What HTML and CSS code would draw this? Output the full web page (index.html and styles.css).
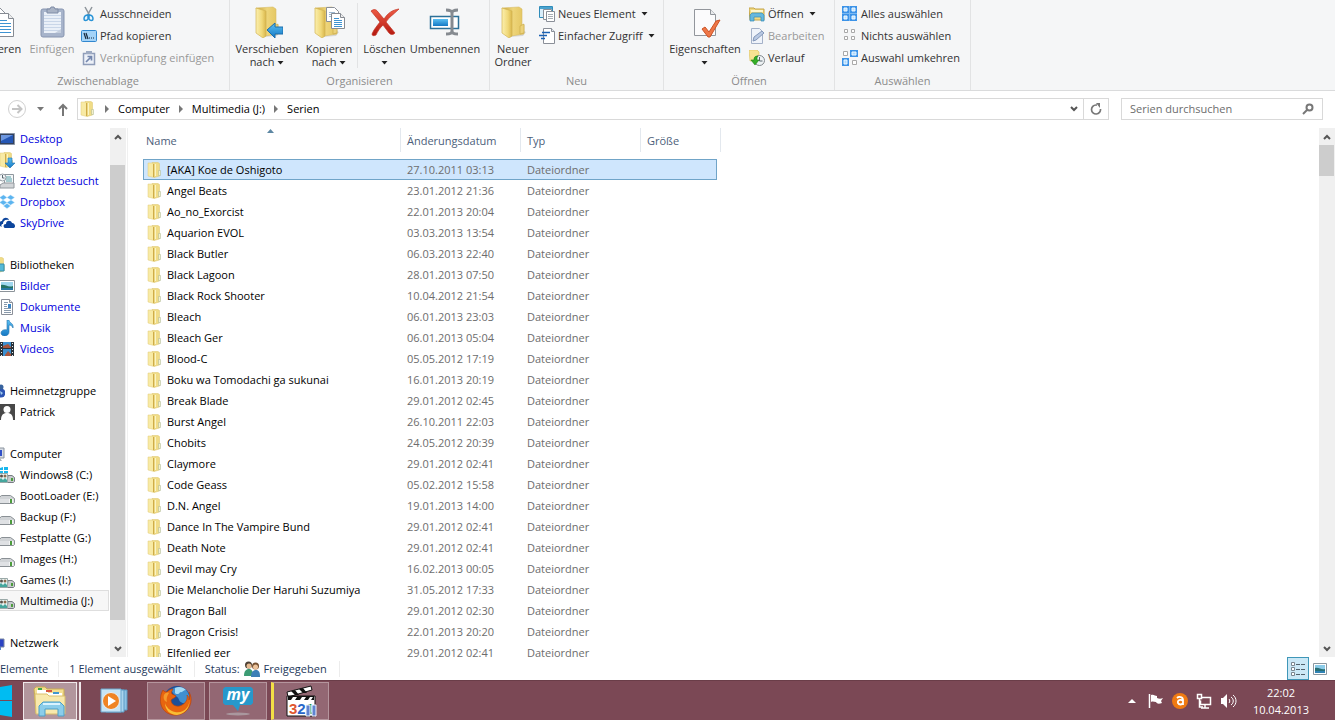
FILE: index.html
```html
<!DOCTYPE html>
<html lang="de">
<head>
  <meta charset="UTF-8">
  <title>Serien</title>
  <link rel="stylesheet" href="styles.css">
</head>
<body>

  <!-- Shared icons -->
  <svg class="sprite" width="0" height="0" aria-hidden="true">
    <defs>
      <linearGradient id="gold" x1="0" y1="0" x2="1" y2="0">
        <stop offset="0" stop-color="#fbefae"/><stop offset=".6" stop-color="#f0d878"/><stop offset="1" stop-color="#d9b64c"/>
      </linearGradient>
      <linearGradient id="goldDark" x1="0" y1="0" x2="1" y2="0">
        <stop offset="0" stop-color="#c9a43c"/><stop offset=".5" stop-color="#eed57a"/><stop offset="1" stop-color="#e3c560"/>
      </linearGradient>
      <linearGradient id="blue" x1="0" y1="0" x2="0" y2="1">
        <stop offset="0" stop-color="#5cc0f3"/><stop offset="1" stop-color="#1478c4"/>
      </linearGradient>
      <linearGradient id="red" x1="0" y1="0" x2="0" y2="1">
        <stop offset="0" stop-color="#ee5b45"/><stop offset="1" stop-color="#b3180f"/>
      </linearGradient>
      <radialGradient id="orange"><stop offset="0" stop-color="#ffc04a"/><stop offset="1" stop-color="#e36a0c"/></radialGradient>
    </defs>
    <symbol id="folder" viewBox="0 0 16 16">
      <path d="M5 .5h6l1.500 1V14L7 15.500z" fill="#f0dc86" stroke="#dcc46a" stroke-width=".5"/>
      <path d="M11.500 8.500h2v5h-2z" fill="#f4f0cc" stroke="#a9b58c" stroke-width=".5"/>
      <path d="M1 1h4l2 1v13.500L5 15l-4-1z" fill="#f8eaa4" stroke="#e0ca78" stroke-width=".5"/>
      <path d="M6.500 2v13" stroke="#cfac48"/>
      <path d="M8.500 2v12" stroke="#fbf4c4"/>
    </symbol>
    <symbol id="bigfolder" viewBox="0 0 32 32">
      <path d="M25 24l4 2-3 4-14 1z" fill="#000" opacity=".12"/>
      <path d="M5 2l17-1 3 2v16h2v9l-13 2z" fill="url(#goldDark)" stroke="#d9be66" stroke-width=".6"/>
      <path d="M23 20l4-2v9l-4 1z" fill="#ecd27b" stroke="#c8a845" stroke-width=".6"/>
      <path d="M5 2l10 3v25l-3 2-7-5z" fill="url(#gold)" stroke="#d3b654" stroke-width=".7"/>
    </symbol>
    <symbol id="page" viewBox="0 0 16 16">
      <path d="M2.500 .5h8l3 3v12h-11z" fill="#fff" stroke="#8a8f98"/>
      <path d="M10.500 .5v3h3" fill="#e4e8ee" stroke="#8a8f98"/>
    </symbol>
    <symbol id="drive" viewBox="0 0 16 16">
      <path d="M2.500 7.500h9l4 3v4l-1 1H-1v-5z" fill="#d0d3d6" stroke="#8a9095"/>
      <path d="M0 11h15v4H0z" fill="#dfe1e4"/>
      <path d="M10 11h4v4h-4z" fill="#f3f4f4"/>
      <path d="M11 11h2v4h-2z" fill="#4c9c3d"/>
    </symbol>
    <symbol id="drivepeople" viewBox="0 0 16 16">
      <path d="M9 8.500h4l2.500 2v4l-1 1H8z" fill="#c6cacd" stroke="#777d83"/>
      <path d="M12 11h2v3h-2z" fill="#4c9c3d"/>
      <path d="M-.5 6.500h9v9h-9z" fill="#e9f4f2" stroke="#9aa9a8"/>
      <circle cx="2.500" cy="9" r="1.500" fill="#59504a"/><circle cx="6" cy="9" r="1.500" fill="#8d6b4e"/>
      <path d="M0 15v-2l2-2 2 2 2-2 2 2v2z" fill="#45a69d"/>
    </symbol>
    <symbol id="caret" viewBox="0 0 7 4"><path d="M.5 0h6l-3 3.500z" fill="#222"/></symbol>
    <symbol id="tri" viewBox="0 0 4 8"><path d="M0 0l4 4-4 4z" fill="#777"/></symbol>
    <symbol id="down" viewBox="0 0 8 8"><path d="M1 2l3 3 3-3" fill="none" stroke="#555" stroke-width="2"/></symbol>
    <symbol id="up" viewBox="0 0 8 8"><path d="M1 6l3-3 3 3" fill="none" stroke="#555" stroke-width="2"/></symbol>
  </svg>

  <!-- Ribbon -->
  <div class="ribbon">
    <section class="group clipboard">
      <div class="tools">
        <button class="big">
          <svg viewBox="0 0 32 32"><path d="M5 2h13l5 5v19H5z" fill="#fff" stroke="#8a8f98"/><path d="M14.500 7.500h12l5 5v18h-17z" fill="#fff" stroke="#858a92"/><path d="M26.500 7.500v5h5" fill="#eee" stroke="#858a92"/><path d="M17 14.500h8m-8 3h12m-12 3h12m-12 3h12m-12 3h12" stroke="#3d93d2"/></svg>
          <span>Kopieren</span>
        </button>
        <button class="big" disabled>
          <svg viewBox="0 0 32 32"><rect x="5" y="3" width="23" height="28" rx="2" fill="#a7b4cb" stroke="#8795b0"/><path d="M8 6h17v21H8z" fill="#eaf0f8"/><path d="M8 9.500h17m-17 3h17m-17 3h17m-17 3h17m-17 3h17m-17 3h17" stroke="#c9d6e8"/><path d="M19 27h6v-4z" fill="#c5cfdf"/><path d="M11 3h3l1-2h3l1 2h3v4H11z" fill="#a9b3c5" stroke="#7f8ca6"/></svg>
          <span>Einfügen</span>
        </button>
        <div class="smalls">
          <button class="small"><svg viewBox="0 0 16 16"><path d="M4 1l5 9M11 1 6 10" stroke="#8d949b" stroke-width="1.500"/><path d="M7 9c-3 0-4 2-4 4s3 2 4 0zM8 9c3 0 4 2 4 4s-3 2-4 0z" fill="#e8f5fd" stroke="#2993d6" stroke-width="1.500"/></svg>Ausschneiden</button>
          <button class="small"><svg viewBox="0 0 16 16"><rect x=".5" y="2.500" width="15" height="11" rx="1" fill="#a4d3f8" stroke="#3187cf"/><path d="M3 5l2 6m0-6 2 6m1-1h1m1 0h1m1 0h1" stroke="#16283c" stroke-width="1.200" fill="none"/></svg>Pfad kopieren</button>
          <button class="small" disabled><svg viewBox="0 0 16 16"><path d="M2.500 3.500h11v11h-11z" fill="#edf1f8" stroke="#8f9db9" stroke-width="1.500"/><path d="M5 1h6v3H5z" fill="#9daac2"/><path d="M5 12l5-5M6.500 6.500H10.500V10.500" fill="none" stroke="#7386ad" stroke-width="1.700"/></svg>Verknüpfung einfügen</button>
        </div>
      </div>
      <h2>Zwischenablage</h2>
    </section>

    <section class="group organize">
      <div class="tools">
        <button class="big">
          <svg viewBox="0 0 32 32"><use href="#bigfolder"/><path d="M16 24l8-7v4h8v7h-8v4z" fill="url(#blue)" stroke="#1a6dac"/></svg>
          <span>Verschieben<br>nach <svg class="caret"><use href="#caret"/></svg></span>
        </button>
        <button class="big">
          <svg viewBox="0 0 32 32"><use href="#bigfolder" x="-3"/><path d="M13.500 1.500h8l4 4v10h-12z" fill="#fff" stroke="#8a8f98"/><path d="M16 6.500h6m-6 2h6m-6 2h6" stroke="#9db9d2"/><path d="M18.500 7.500h9l4 4v11h-13z" fill="#fff" stroke="#858a92"/><path d="M27.500 7.500v4h4" fill="#eee" stroke="#858a92"/><path d="M21 12.500h5m-5 2h8m-8 2h8m-8 2h8m-8 2h8" stroke="#3d93d2"/></svg>
          <span>Kopieren<br>nach <svg class="caret"><use href="#caret"/></svg></span>
        </button>
        <button class="big delete">
          <svg viewBox="0 0 32 32"><path d="M2 5c3-2 5-2 7 1l6 7c4-6 8-9 15-10-6 6-10 8-13 13l9 11c-2 2-4 2-6 0l-6-8c-4 4-5 6-7 10-2 1-4 1-4-1 2-5 5-8 8-12z" fill="url(#red)" stroke="#c13324" stroke-width=".7"/></svg>
          <span>Löschen<br><svg class="caret"><use href="#caret"/></svg></span>
        </button>
        <button class="big">
          <svg viewBox="0 0 32 32"><path d="M1.500 10.500h28v12h-28z" fill="#fff" stroke="#2c7098" stroke-width="1.500"/><path d="M4 13h15v7H4z" fill="url(#blue)"/><path d="M17 4c4 0 6 1 6 3 0-2 2-3 6-3M17 28c4 0 6-1 6-3 0 2 2 3 6 3M23 7v18" fill="none" stroke="#858a90" stroke-width="3"/></svg>
          <span>Umbenennen</span>
        </button>
      </div>
      <h2>Organisieren</h2>
    </section>

    <section class="group new">
      <div class="tools">
        <button class="big">
          <svg viewBox="0 0 32 32"><use href="#bigfolder"/></svg>
          <span>Neuer<br>Ordner</span>
        </button>
        <div class="smalls">
          <button class="small"><svg viewBox="0 0 16 16"><path d="M.5 .5h13v11H.5z" fill="#d8eefb" stroke="#2f8cba"/><path d="M1 1h12v2H1z" fill="#4aa3cf"/><path d="M4.500 3.500h8v10h-8z" fill="#fff" stroke="#8a8f98"/><path d="M7.500 5.500h8v10h-8z" fill="#fff" stroke="#8a8f98"/><path d="M9 8.500h5m-5 2h5m-5 2h5" stroke="#a7adb4"/></svg>Neues Element <svg class="caret"><use href="#caret"/></svg></button>
          <button class="small"><svg viewBox="0 0 16 16"><use href="#page" x="2"/><path d="M3 4.500h8M0 7.500h8M2 10.500h4" stroke="#1b62b4" stroke-width="1.500"/></svg>Einfacher Zugriff <svg class="caret"><use href="#caret"/></svg></button>
        </div>
      </div>
      <h2>Neu</h2>
    </section>

    <section class="group open">
      <div class="tools">
        <button class="big">
          <svg viewBox="0 0 32 32"><path d="M5.500 3.500h16l5 5v21h-21z" fill="#fbfbfc" stroke="#92969c"/><path d="M21.500 3.500v5h5" fill="#e8eaec" stroke="#92969c"/><path d="M13 23l3-2 4 5 7-11 4-1-10 17h-2z" fill="#ee7647" stroke="#cc5426"/></svg>
          <span>Eigenschaften<br><svg class="caret"><use href="#caret"/></svg></span>
        </button>
        <div class="smalls">
          <button class="small"><svg viewBox="0 0 16 16"><path d="M0 2h5l1 1h9v11H1z" fill="#f2da83" stroke="#c4a548"/><path d="M2 4h12v2H2z" fill="#fdf6cf"/><path d="M1 9l2-2h10l2 2v6h-3v-4H5v4H1z" fill="#66b8de" stroke="#348bb5" stroke-width=".7"/></svg>Öffnen <svg class="caret"><use href="#caret"/></svg></button>
          <button class="small" disabled><svg viewBox="0 0 16 16"><path d="M2.500 .5h8l3 3v12h-11z" fill="#eff3fa" stroke="#a4b1c8"/><path d="M4 13l1-4 8-6 2 2-8 7z" fill="#b8c8e2" stroke="#8397b9"/></svg>Bearbeiten</button>
          <button class="small"><svg viewBox="0 0 16 16"><path d="M0 0h8l2 2v9H1z" fill="#f8e392" stroke="#dcbf58" stroke-width=".6"/><circle cx="10.500" cy="10.500" r="5" fill="#eef2f4" stroke="#82898d"/><path d="M10.500 7v4h3" fill="none" stroke="#59666e"/><path d="M9 6c-3 0-4 1-4 4H2l4 5 4-5H8c0-2 0-3 1-4z" fill="#35ae26" stroke="#188112" stroke-width=".6"/></svg>Verlauf</button>
        </div>
      </div>
      <h2>Öffnen</h2>
    </section>

    <section class="group select">
      <div class="tools">
        <div class="smalls">
          <button class="small"><svg viewBox="0 0 16 16"><path d="M0 0h7v7H0zM8 0h7v7H8zM0 8h7v7H0zM8 8h7v7H8z" fill="#3c93e8"/><path d="M7 0h1v15H7zM0 7h15v1H0z" fill="#7ab8f2"/><path d="M2 2h3v3H2zM10 2h3v3h-3zM2 10h3v3H2zM10 10h3v3h-3z" fill="#b9e0ff" stroke="#eef8ff"/></svg>Alles auswählen</button>
          <button class="small"><svg viewBox="0 0 16 16"><path d="M2.500 1.500h3v3h-3zM9.500 1.500h3v3h-3zM2.500 8.500h3v3h-3zM9.500 8.500h3v3h-3z" fill="#fff" stroke="#a9a9a9"/></svg>Nichts auswählen</button>
          <button class="small"><svg viewBox="0 0 16 16"><path d="M8 0h8v7H8zM0 8h7v8H0z" fill="#3c93e8"/><path d="M10 2h4v3h-4zM2 10h3v4H2z" fill="#a9d8ff" stroke="#eef8ff"/><path d="M1.500 1.500h4v4h-4zM10.500 10.500h4v4h-4z" fill="#fff" stroke="#a9a9a9"/></svg>Auswahl umkehren</button>
        </div>
      </div>
      <h2>Auswählen</h2>
    </section>
  </div>

  <!-- Address bar -->
  <div class="navbar">
    <button class="nav-btn forward" aria-label="Vorwärts" disabled><svg width="20" height="20" viewBox="0 0 20 20"><circle cx="10" cy="10" r="8.500" fill="none" stroke="#d0d0d0"/><path d="M5 10h9M10.500 6l4 4-4 4" fill="none" stroke="#c4c4c4" stroke-width="2"/></svg></button>
    <button class="nav-btn recent" aria-label="Zuletzt besuchte Orte"><svg width="7" height="4" viewBox="0 0 7 4"><path d="M0 0h7L3.500 4z" fill="#777"/></svg></button>
    <button class="nav-btn" aria-label="Nach oben"><svg width="10" height="13" viewBox="0 0 10 13"><path d="M5 13V2M1 6l4-4 4 4" fill="none" stroke="#777" stroke-width="2"/></svg></button>
    <div class="address">
      <svg class="icon"><use href="#folder"/></svg>
      <svg class="tri"><use href="#tri"/></svg>
      <button>Computer</button>
      <svg class="tri"><use href="#tri"/></svg>
      <button>Multimedia (J:)</button>
      <svg class="tri"><use href="#tri"/></svg>
      <button>Serien</button>
      <button class="drop" aria-label="Vorherige Orte"><svg width="8" height="8"><use href="#down"/></svg></button>
      <button class="refresh" aria-label="Aktualisieren"><svg width="12" height="12" viewBox="0 0 12 12"><path d="M10.500 6A4.500 4.500 0 1 1 6 2h1" fill="none" stroke="#777" stroke-width="1.700"/><path d="M6 0h4v5z" fill="#777"/></svg></button>
    </div>
    <label class="search">
      <input type="search" placeholder="Serien durchsuchen" aria-label="Serien durchsuchen">
      <svg width="12" height="12" viewBox="0 0 12 12"><circle cx="7.500" cy="4.500" r="3" fill="none" stroke="#777" stroke-width="2"/><path d="M5 7l-4 4" stroke="#777" stroke-width="2"/></svg>
    </label>
  </div>

  <main>
    <!-- Navigation pane -->
    <nav>
      <a class="sub link" href="#"><svg class="icon" viewBox="0 0 16 16"><path d="M.5 2.500h15v11H.5z" fill="#34425c" stroke="#8994a6"/><path d="M2 4h12v8H2z" fill="#2456b4"/><path d="M2 4h12L2 10z" fill="#6d97e0"/></svg>Desktop</a>
      <a class="sub link" href="#"><svg class="icon" viewBox="0 0 16 16"><use href="#folder"/><path d="M9 6h4v5h3l-5 5-5-5h3z" fill="url(#blue)" stroke="#1c6eac" stroke-width=".6"/></svg>Downloads</a>
      <a class="sub link" href="#"><svg class="icon" viewBox="0 0 16 16"><path d="M5.500 1.500h9v9h-9z" fill="#f5f7f8" stroke="#8f979e"/><path d="M7 4h5m-5 2h6m-6 2h6" stroke="#55a0a8"/><path d="M1 12l3-2h11v5H1z" fill="#d2d5d8" stroke="#92989d"/><circle cx="3.500" cy="4.500" r="3.500" fill="#f4f7f9" stroke="#949ca3"/><path d="M3.500 2v3h2" fill="none" stroke="#58666f"/></svg>Zuletzt besucht</a>
      <a class="sub link" href="#"><svg class="icon" viewBox="0 0 16 16"><path d="M4.500 1 8 3.500 4 6 .5 3.500zM11.500 1 8 3.500 12 6l3.500-2.500zM4 6l4 2.500L4.500 11 .5 8.500zM12 6 8 8.500l3.500 2.500 4-2.500zM4.500 12 8 9.500l3.500 2.500L8 14.500z" fill="#5bb4f0" stroke="#bfe2fa" stroke-width=".4"/></svg>Dropbox</a>
      <a class="sub link" href="#"><svg class="icon" viewBox="0 0 16 16"><path d="M1 11c-2-3 0-5 2-5 1-4 6-4 7-1-4-1-6 1-6 4-2 0-2 2-1 3z" fill="#0d459c"/><path d="M6 13c-2-1-2-4 1-4 0-4 5-4 6-1 3 0 4 4 2 5z" fill="#0d459c"/></svg>SkyDrive</a>

      <a class="head" href="#"><svg class="icon" viewBox="0 0 16 16"><use href="#folder" x="2"/><path d="M10 7h5v7h-5z" fill="#54b9d8" stroke="#358eac"/></svg>Bibliotheken</a>
      <a class="sub link" href="#"><svg class="icon" viewBox="0 0 16 16"><path d="M.5 2.500h15v11H.5z" fill="#fff" stroke="#8d949a"/><path d="M2 4h12v8H2z" fill="#9fd7ee"/><path d="M2 7c4-1 7 3 12 1v4H2z" fill="#237263"/><path d="M2 10h12v2H2z" fill="#2778a3"/></svg>Bilder</a>
      <a class="sub link" href="#"><svg class="icon" viewBox="0 0 16 16"><use href="#page"/><path d="M5 3.500h4m-4 2h3m-3 2h3m-3 2h7m-7 2h7m-7 2h7" stroke="#8899ab"/><path d="M9 5h3v4H9z" fill="#3a85c4"/></svg>Dokumente</a>
      <a class="sub link" href="#"><svg class="icon" viewBox="0 0 16 16"><path d="M8 0h2c0 3 5 3 4 8-1-2-2-3-4-3v7c0 5-8 5-8 1 0-3 4-4 6-3z" fill="url(#blue)" stroke="#2373ac" stroke-width=".6"/></svg>Musik</a>
      <a class="sub link" href="#"><svg class="icon" viewBox="0 0 16 16"><path d="M1 1h14v14H1z" fill="#29323a"/><path d="M4 1h8v6H4zM4 8h8v7H4z" fill="#3c90d0"/><path d="M4 5l5-2 3 3v1H4zm2 9 3-4 3 3v2H6z" fill="#a8553d"/><path d="M2.500 2v13M13.500 2v13" stroke="#e9edef" stroke-dasharray="1 2"/></svg>Videos</a>

      <a class="head" href="#"><svg class="icon" viewBox="0 0 16 16"><circle cx="8" cy="7" r="4" fill="#4fc04a"/><circle cx="12" cy="10" r="4.500" fill="#2c54b3"/><circle cx="12" cy="4" r="2.500" fill="#38639e"/><path d="M11 8l3 2-2 2z" fill="#a5cfef"/></svg>Heimnetzgruppe</a>
      <a class="sub" href="#"><svg class="icon" viewBox="0 0 16 16"><path d="M0 0h16v16H0z" fill="#484848"/><circle cx="8" cy="5.500" r="3.500" fill="#fff"/><path d="M2 16c0-6 3-7 6-7s6 1 6 7z" fill="#fff"/></svg>Patrick</a>

      <a class="head" href="#"><svg class="icon" viewBox="0 0 16 16"><path d="M3 2h12v10H3z" fill="#d6dce4" stroke="#8b949e"/><path d="M5 4h8v6H5z" fill="#3050c8"/><path d="M7 12h4l2 3H5z" fill="#aab2ba"/></svg>Computer</a>
      <a class="sub" href="#"><svg class="icon" viewBox="0 0 16 16"><use href="#drivepeople"/><path d="M1 1l3-1v3H1zM5 0h4v3H5zM1 4h3v2H1zM5 4h4v2H5z" fill="#18b6ed"/></svg>Windows8 (C:)</a>
      <a class="sub" href="#"><svg class="icon"><use href="#drive"/></svg>BootLoader (E:)</a>
      <a class="sub" href="#"><svg class="icon"><use href="#drive"/></svg>Backup (F:)</a>
      <a class="sub" href="#"><svg class="icon"><use href="#drive"/></svg>Festplatte (G:)</a>
      <a class="sub" href="#"><svg class="icon"><use href="#drive"/></svg>Images (H:)</a>
      <a class="sub" href="#"><svg class="icon"><use href="#drivepeople"/></svg>Games (I:)</a>
      <a class="sub current" href="#"><svg class="icon"><use href="#drivepeople"/></svg>Multimedia (J:)</a>

      <a class="head" href="#"><svg class="icon" viewBox="0 0 16 16"><path d="M5 4h10v8H5z" fill="#2b43c4" stroke="#7986a0"/><path d="M8 12h4v3H8z" fill="#5a84c9"/></svg>Netzwerk</a>
    </nav>
    <div class="scrollbar nav-scroll">
      <button aria-label="Nach oben blättern"><svg width="8" height="8"><use href="#up"/></svg></button>
      <div class="track"><div class="thumb"></div></div>
      <button aria-label="Nach unten blättern"><svg width="8" height="8"><use href="#down"/></svg></button>
    </div>

    <!-- File list -->
    <div class="files">
      <table>
        <thead>
          <tr><th class="name">Name<svg class="sort" width="7" height="4" viewBox="0 0 7 4"><path d="M3.500 0 7 4H0z" fill="#5d87a3"/></svg></th><th class="date">Änderungsdatum</th><th class="type">Typ</th><th class="size">Größe</th><th class="rest"></th></tr>
        </thead>
        <tbody>
          <tr class="selected"><td><svg class="icon"><use href="#folder"/></svg>[AKA] Koe de Oshigoto</td><td>27.10.2011 03:13</td><td>Dateiordner</td><td></td></tr>
          <tr><td><svg class="icon"><use href="#folder"/></svg>Angel Beats</td><td>23.01.2012 21:36</td><td>Dateiordner</td><td></td></tr>
          <tr><td><svg class="icon"><use href="#folder"/></svg>Ao_no_Exorcist</td><td>22.01.2013 20:04</td><td>Dateiordner</td><td></td></tr>
          <tr><td><svg class="icon"><use href="#folder"/></svg>Aquarion EVOL</td><td>03.03.2013 13:54</td><td>Dateiordner</td><td></td></tr>
          <tr><td><svg class="icon"><use href="#folder"/></svg>Black Butler</td><td>06.03.2013 22:40</td><td>Dateiordner</td><td></td></tr>
          <tr><td><svg class="icon"><use href="#folder"/></svg>Black Lagoon</td><td>28.01.2013 07:50</td><td>Dateiordner</td><td></td></tr>
          <tr><td><svg class="icon"><use href="#folder"/></svg>Black Rock Shooter</td><td>10.04.2012 21:54</td><td>Dateiordner</td><td></td></tr>
          <tr><td><svg class="icon"><use href="#folder"/></svg>Bleach</td><td>06.01.2013 23:03</td><td>Dateiordner</td><td></td></tr>
          <tr><td><svg class="icon"><use href="#folder"/></svg>Bleach Ger</td><td>06.01.2013 05:04</td><td>Dateiordner</td><td></td></tr>
          <tr><td><svg class="icon"><use href="#folder"/></svg>Blood-C</td><td>05.05.2012 17:19</td><td>Dateiordner</td><td></td></tr>
          <tr><td><svg class="icon"><use href="#folder"/></svg>Boku wa Tomodachi ga sukunai</td><td>16.01.2013 20:19</td><td>Dateiordner</td><td></td></tr>
          <tr><td><svg class="icon"><use href="#folder"/></svg>Break Blade</td><td>29.01.2012 02:45</td><td>Dateiordner</td><td></td></tr>
          <tr><td><svg class="icon"><use href="#folder"/></svg>Burst Angel</td><td>26.10.2011 22:03</td><td>Dateiordner</td><td></td></tr>
          <tr><td><svg class="icon"><use href="#folder"/></svg>Chobits</td><td>24.05.2012 20:39</td><td>Dateiordner</td><td></td></tr>
          <tr><td><svg class="icon"><use href="#folder"/></svg>Claymore</td><td>29.01.2012 02:41</td><td>Dateiordner</td><td></td></tr>
          <tr><td><svg class="icon"><use href="#folder"/></svg>Code Geass</td><td>05.02.2012 15:58</td><td>Dateiordner</td><td></td></tr>
          <tr><td><svg class="icon"><use href="#folder"/></svg>D.N. Angel</td><td>19.01.2013 14:00</td><td>Dateiordner</td><td></td></tr>
          <tr><td><svg class="icon"><use href="#folder"/></svg>Dance In The Vampire Bund</td><td>29.01.2012 02:41</td><td>Dateiordner</td><td></td></tr>
          <tr><td><svg class="icon"><use href="#folder"/></svg>Death Note</td><td>29.01.2012 02:41</td><td>Dateiordner</td><td></td></tr>
          <tr><td><svg class="icon"><use href="#folder"/></svg>Devil may Cry</td><td>16.02.2013 00:05</td><td>Dateiordner</td><td></td></tr>
          <tr><td><svg class="icon"><use href="#folder"/></svg>Die Melancholie Der Haruhi Suzumiya</td><td>31.05.2012 17:33</td><td>Dateiordner</td><td></td></tr>
          <tr><td><svg class="icon"><use href="#folder"/></svg>Dragon Ball</td><td>29.01.2012 02:30</td><td>Dateiordner</td><td></td></tr>
          <tr><td><svg class="icon"><use href="#folder"/></svg>Dragon Crisis!</td><td>22.01.2013 20:20</td><td>Dateiordner</td><td></td></tr>
          <tr><td><svg class="icon"><use href="#folder"/></svg>Elfenlied ger</td><td>29.01.2012 02:41</td><td>Dateiordner</td><td></td></tr>
        </tbody>
      </table>
    </div>
    <div class="scrollbar file-scroll">
      <button aria-label="Nach oben blättern"><svg width="8" height="8"><use href="#up"/></svg></button>
      <div class="track"><div class="thumb"></div></div>
      <button aria-label="Nach unten blättern"><svg width="8" height="8"><use href="#down"/></svg></button>
    </div>
  </main>

  <!-- Status bar -->
  <div class="status">
    <span class="count">Elemente</span>
    <span>1 Element ausgewählt</span>
    <span class="shared">Status: <svg class="icon" viewBox="0 0 16 16"><circle cx="4.500" cy="4" r="3.500" fill="#4d4035"/><circle cx="5" cy="5" r="2.500" fill="#e8bb91"/><path d="M0 15c0-5 2-7 5-7s4 2 4 7z" fill="#3c9c74"/><circle cx="11.500" cy="5" r="3.500" fill="#765132"/><circle cx="11.500" cy="6" r="2.500" fill="#edc49c"/><path d="M7 16c0-5 2-7 5-7s4 2 4 7z" fill="#3c7fb6"/></svg> Freigegeben</span>
    <div class="views">
      <button class="active" aria-label="Details"><svg width="16" height="14" viewBox="0 0 16 14"><path d="M1.500 .5h3v3h-3zM1.500 5.500h3v3h-3zM1.500 10.500h3v3h-3z" fill="#fff" stroke="#7b8790"/><path d="M6 2.500h10m-10 5h10m-10 5h10" stroke="#52616c" stroke-dasharray="4 1"/></svg></button>
      <button aria-label="Große Symbole"><svg width="14" height="12" viewBox="0 0 14 12"><path d="M.5 .5h13v11H.5z" fill="#fff" stroke="#8b979f"/><path d="M2 2h10v8H2z" fill="#8bcbe8"/><path d="M2 5c4-1 6 2 10 1v4H2z" fill="#286f74"/><path d="M2 8h10v2H2z" fill="#2f82b4"/></svg></button>
    </div>
  </div>

  <!-- Taskbar -->
  <footer>
    <button class="start" aria-label="Start"><svg width="24" height="34" viewBox="0 0 24 34"><path d="M0 4l11-1v13H0zM12 3l12-2v15H12zM0 17h11v14l-11-1zM12 17h12v16l-12-2z" fill="#00bcf2"/></svg></button>
    <button class="task stacked" aria-label="Explorer"><svg width="34" height="32" viewBox="0 0 34 32">
      <path d="M1 4l2-2h9l2 2h17v24H3z" fill="#f4df92" stroke="#c9ad53"/><path d="M4 5h11v3h14v4H4z" fill="#fff"/><path d="M5 3h4v2H5z" fill="#3fa64a"/><path d="M13 5h6v2h-6z" fill="#d9573f"/><path d="M20 7h6v2h-6z" fill="#4097cf"/><path d="M2 9h12l2 2h16v18H3z" fill="#f8e9ad" stroke="#d9bf6e"/><path d="M6 21l4-4h17l4 4v10h-6v-7H12v7H6z" fill="#8bcdea" stroke="#4c9fc8"/><path d="M10 19h17" stroke="#d9f3ff" stroke-width="2"/></svg></button>
    <button class="task plain" aria-label="Media Player"><svg width="28" height="28" viewBox="0 0 28 28">
      <path d="M9 3h18v20H9z" fill="#8fc3e5" stroke="#5d9bc5"/><path d="M6 3h18v22H6z" fill="#a9d4ee" stroke="#5d9bc5"/><path d="M1 2h20v23H1z" fill="#c7e4f5" stroke="#6aa6cd"/><circle cx="11" cy="14" r="8.500" fill="#f08424" stroke="#e7f0f5"/><path d="M8 9l8 5-8 5z" fill="#fff"/></svg></button>
    <button class="task" aria-label="Firefox"><svg width="32" height="32" viewBox="0 0 32 32">
      <circle cx="17" cy="14" r="13" fill="#1d4f97"/><path d="M11 5c4-4 11-4 15 0 3 3 4 7 3 11-3 3-8 3-10-1 0-3-5-4-8-10z" fill="#3f8fd0"/><path d="M15 3c4-2 8-1 11 2-3 0-3 3-6 2 0 2-4 3-5 1z" fill="#a5dbf5"/><path d="M3 5c1 2 3 2 4 2 2-2 4-3 6-3-1 2-2 3-1 5l4 2c-1 2-3 2-5 4 0 5 6 8 11 5 4-2 6-6 5-10 2 2 2 3 2 5 1-3 1-5 0-8 4 7 2 15-4 20-7 5-17 4-22-3C-1 18 0 10 3 5z" fill="#e8650f" stroke="#bb430d" stroke-width=".7"/><path d="M29 13c2 8-5 16-14 14-5-1-9-5-10-9 0 7 5 12 12 12 9-1 14-9 12-17z" fill="#f9bd34"/><path d="M4 10c1-2 3-3 5-2-2 3-3 6-2 9-3-1-4-4-3-7z" fill="#f59a2d"/></svg></button>
    <button class="task" aria-label="my"><svg width="32" height="32" viewBox="0 0 32 32">
      <ellipse cx="16" cy="29" rx="12" ry="1.500" fill="#b4adb0" opacity=".7"/><path d="M3 2h26l2 2v14l-2 2H18l-2 6-5-6H3l-2-2V4z" fill="#2698cb"/><text x="16" y="15" class="my">my</text></svg></button>
    <button class="task alert" aria-label="Media Player Classic"><svg width="32" height="32" viewBox="0 0 32 32">
      <path d="M2 7l24-6 1 4L3 12z" fill="#fff" stroke="#111"/><path d="M6 6l4 4h4l-4-5zM14 4l4 4h4l-4-5z" fill="#111"/><path d="M2 11h28v20H2z" fill="#fff" stroke="#111"/><path d="M3 11h26v4H3z" fill="#111"/><path d="M8 12h4l-2 3H6zM17 12h4l-2 3h-4zM25 12h3l-2 3h-3z" fill="#fff"/><text x="4" y="29" class="digits"><tspan fill="#df5730">3</tspan><tspan fill="#2866c9">2</tspan><tspan fill="#319643">1</tspan></text><path d="M21 20h4v11h-4zM27 20h4v11h-4z" fill="#5f83d0" stroke="#eef2fb"/></svg></button>

    <div class="tray">
      <svg width="24" height="24" viewBox="0 0 24 24"><path d="M12 10l4 4H8z" fill="#fff"/></svg>
      <svg width="24" height="24" viewBox="0 0 24 24"><path d="M5.500 5v14" stroke="#fff" stroke-width="1.500"/><path d="M7 6c3-1 4 1 6 1v2c2 1 4 1 6 0l-2 3 1 2c-3 1-5 1-6-1-2 0-3-1-5 0z" fill="#fff"/></svg>
      <svg width="24" height="24" viewBox="0 0 24 24"><circle cx="12" cy="12" r="8" fill="#ef7a12"/><path d="M9 9c2-2 6-1 6 2v5M15 12c-2-2-6-1-5 2 1 2 4 2 5 0" fill="none" stroke="#fff" stroke-width="1.800"/></svg>
      <svg width="24" height="24" viewBox="0 0 24 24"><path d="M10 8.500h8.500v7h-10v-4M13 16v3m-4 0h8" fill="none" stroke="#fff" stroke-width="1.500"/><path d="M5.500 5.500h4v4h-4zM7.500 10v8H11" fill="none" stroke="#fff" stroke-width="1.500"/></svg>
      <svg width="24" height="24" viewBox="0 0 24 24"><path d="M5 9h2l4-4v14l-4-4H5z" fill="#fff"/><path d="M13 10c1 1 1 3 0 4M15 8c3 2 3 6 0 8M17 6c4 3 4 9 0 12" fill="none" stroke="#fff"/></svg>
      <time>22:02<br>10.04.2013</time>
    </div>
  </footer>

</body>
</html>
```
FILE: styles.css
```css
* {
  box-sizing: border-box;
}

body {
  margin: 0;
  height: 100vh;
  display: flex;
  flex-direction: column;
  overflow: hidden;
  background: #fff;
  color: #000;
  font-family: "Open Sans", "Noto Sans", sans-serif;
  font-size: 11px;
  line-height: 16px;
}

button {
  margin: 0;
  padding: 0;
  border: none;
  background: none;
  color: inherit;
  font: inherit;
}

svg {
  flex: none;
}

.sprite {
  position: absolute;
}

.icon {
  width: 16px;
  height: 16px;
}

.caret {
  width: 7px;
  height: 4px;
}

/* Ribbon */
.ribbon {
  flex: none;
  display: flex;
  height: 91px;
  background: #f5f6f7;
  border-bottom: 1px solid #dadbdc;
  color: #333;
}

.group {
  flex: none;
  display: flex;
  flex-direction: column;
  justify-content: space-between;
  padding: 3px 0 2px;
  border-right: 1px solid #e2e3e4;
}

.tools {
  display: grid;
}

.group h2 {
  margin: 0;
  font-size: 11px;
  font-weight: normal;
  line-height: 14px;
  text-align: center;
  color: #8c8c8c;
}

.clipboard {
  width: 263px;
  margin-left: -33px;
}

.clipboard .tools {
  grid-template-columns: 56px 52px auto;
  padding-left: 3px;
}

.organize {
  width: 260px;
}

.organize .tools {
  grid-template-columns: 68px 56px 54px 68px;
  padding-left: 3px;
}

.new {
  width: 174px;
}

.new .tools {
  grid-template-columns: 46px auto;
}

.open {
  width: 171px;
}

.open .tools {
  grid-template-columns: 82px auto;
}

.select {
  width: 136px;
}

.select .tools {
  padding-left: 4px;
}

.big {
  display: flex;
  flex-direction: column;
  align-items: center;
  gap: 4px;
  line-height: 13px;
  padding-top: 3px;
  white-space: nowrap;
}

.big > svg {
  width: 32px;
  height: 32px;
}

.big .caret {
  vertical-align: middle;
}

.delete {
  border-left: 1px solid #e2e3e4;
}

.smalls {
  display: flex;
  flex-direction: column;
  align-items: flex-start;
}

.small {
  display: flex;
  align-items: center;
  gap: 3px;
  height: 22px;
  padding: 0 3px;
  white-space: nowrap;
}

.small > svg:first-child {
  width: 16px;
  height: 16px;
}

.small .caret {
  margin-left: 2px;
}

button:disabled {
  color: #999;
}

/* Address bar */
.navbar {
  flex: none;
  display: flex;
  align-items: center;
  height: 37px;
  padding: 0 12px 1px 7px;
}

.nav-btn {
  display: flex;
  justify-content: center;
  width: 20px;
  margin-right: 3px;
}

.address {
  flex: 1;
  display: flex;
  align-items: center;
  gap: 9px;
  height: 22px;
  margin-left: 1px;
  padding-left: 2px;
  border: 1px solid #d9d9d9;
}

.tri {
  width: 4px;
  height: 8px;
}

.drop {
  margin-left: auto;
}

.drop svg,
.refresh svg {
  display: block;
}

.refresh {
  width: 25px;
  height: 20px;
  padding-left: 6px;
  margin-left: -4px;
  border-left: 1px solid #d9d9d9;
}

.search {
  display: flex;
  align-items: center;
  width: 202px;
  height: 22px;
  margin-left: 12px;
  padding: 0 8px;
  border: 1px solid #d9d9d9;
}

.search input {
  flex: 1;
  min-width: 0;
  padding: 0;
  border: none;
  outline: none;
  font: inherit;
}

.search input::placeholder {
  color: #6d6d6d;
}

/* Panes */
main {
  flex: 1;
  min-height: 0;
  display: flex;
  overflow: hidden;
}

nav {
  flex: none;
  width: 110px;
  overflow: hidden;
}

nav a {
  display: flex;
  align-items: center;
  gap: 5px;
  height: 21px;
  color: #000;
  text-decoration: none;
  white-space: nowrap;
}

nav .head {
  margin-left: -11px;
}

nav a + .head {
  margin-top: 21px;
}

nav .sub {
  margin-left: -1px;
  margin-right: 1px;
}

nav .link {
  color: #0000dc;
}

nav .current {
  background: #f7f7f7;
  box-shadow: inset 0 0 0 1px #dedede;
}

.scrollbar {
  flex: none;
  display: flex;
  flex-direction: column;
  width: 16px;
  background: #f0f0f0;
}

.scrollbar button {
  display: flex;
  align-items: center;
  justify-content: center;
  height: 17px;
}

.track {
  flex: 1;
  display: flex;
  flex-direction: column;
  justify-content: center;
}

.thumb {
  width: 15px;
  background: #cdcdcd;
}

.nav-scroll .thumb {
  height: 92%;
}

.file-scroll .track {
  justify-content: flex-start;
}

.file-scroll .thumb {
  height: 31px;
}

.files {
  flex: 1;
  margin-left: 1px;
  padding-left: 15px;
  border-left: 1px solid #f0f0f0;
  overflow: hidden;
}

table {
  width: 100%;
  table-layout: fixed;
  border-spacing: 0;
}

th,
td {
  padding: 0 0 0 6px;
  font-weight: normal;
  text-align: left;
  white-space: nowrap;
}

th {
  position: relative;
  height: 31px;
  padding-bottom: 5px;
  border-left: 1px solid transparent;
  border-image: linear-gradient(#e3e8ee 75%, transparent 75%) 1;
  color: #4c607a;
}

th.name {
  width: 257px;
  padding-left: 3px;
  border: none;
}

th.date,
th.type {
  width: 120px;
}

th.size {
  width: 80px;
}

.sort {
  position: absolute;
  top: 1px;
  left: 124px;
}

td {
  height: 21px;
  padding-left: 7px;
  color: #6d6d6d;
}

td:first-child {
  display: flex;
  align-items: center;
  gap: 4px;
  padding-left: 4px;
  color: #000;
}

td:last-child {
  border-right: 3px solid transparent;
  background-clip: padding-box;
}

.selected td {
  background-color: #cfe6fd;
  box-shadow: inset 0 1px #70a4c8, inset 0 -1px #70a4c8;
}

.selected td:first-child {
  box-shadow: inset 0 1px #70a4c8, inset 0 -1px #70a4c8, inset 1px 0 #70a4c8;
}

.selected td:last-child {
  box-shadow: inset 0 1px #70a4c8, inset 0 -1px #70a4c8, inset -1px 0 #70a4c8;
}

/* Status bar */
.status {
  flex: none;
  display: flex;
  align-items: center;
  height: 23px;
  color: #1e395b;
}

.status > span {
  padding: 0 12px 0 10px;
  border-right: 1px solid #ececec;
  white-space: nowrap;
}

.status .count {
  padding: 0 10px 0 0;
}

.status .shared {
  display: flex;
  align-items: center;
  gap: 4px;
}

.views {
  display: flex;
  align-items: center;
  gap: 4px;
  height: 23px;
  margin-left: auto;
  padding-right: 8px;
}

.views button {
  display: flex;
  align-items: center;
  justify-content: center;
}

.views .active {
  width: 22px;
  height: 23px;
  background: #cbe8f6;
  border: 1px solid #3f97b8;
}

/* Taskbar */
footer {
  flex: none;
  display: flex;
  align-items: center;
  gap: 4px;
  height: 40px;
  background: #7b4855;
  border-top: 1px solid #6a3d48;
}

.start {
  display: flex;
  width: 19px;
  margin-left: -12px;
  margin-right: 12px;
}

.task {
  display: flex;
  align-items: center;
  justify-content: center;
  width: 58px;
  height: 38px;
  background: #936773;
  border: 1px solid #b5959d;
}

.plain {
  background: none;
  border-color: transparent;
}

.stacked {
  width: 54px;
  margin-right: 4px;
  background: #b2969d;
  border-color: #f0e8ea;
  box-shadow: 2px 0 #8d6570, 4px 0 #efe7e9;
}

.alert {
  border-left: 3px solid #f3df46;
}

.my {
  fill: #fff;
  font: italic bold 16px "Open Sans", sans-serif;
  text-anchor: middle;
}

.digits {
  font: bold 15px "Liberation Sans", sans-serif;
}

.tray {
  display: flex;
  align-items: center;
  margin-left: auto;
  padding-right: 26px;
  color: #fff;
}

.tray time {
  margin-left: 13px;
  text-align: center;
  line-height: 17px;
}
```
